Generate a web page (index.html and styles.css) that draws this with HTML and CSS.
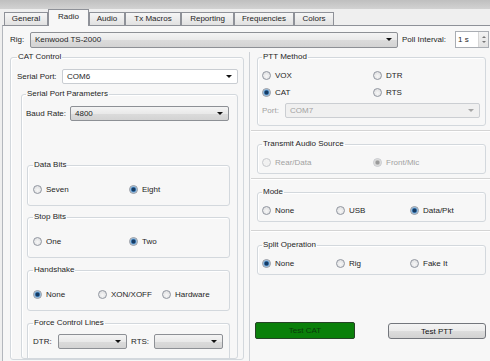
FILE: index.html
```html
<!DOCTYPE html>
<html lang="en">
<head>
    <meta charset="UTF-8">
    <title>Settings - Radio</title>
    <link rel="stylesheet" href="styles.css">
</head>
<body>
    <div class="frame-top"></div>

    <div class="tabbar">
        <div class="tab t-general">General</div>
        <div class="tab t-radio active">Radio</div>
        <div class="tab t-audio">Audio</div>
        <div class="tab t-macros">Tx Macros</div>
        <div class="tab t-reporting">Reporting</div>
        <div class="tab t-freq">Frequencies</div>
        <div class="tab t-colors">Colors</div>
    </div>

    <div class="page">
        <div class="rig-row">
            <span class="lbl lbl-rig">Rig:</span>
            <div class="combo combo-rig"><span class="combo-text">Kenwood TS-2000</span><span class="arrow"></span></div>
            <span class="lbl lbl-poll">Poll Interval:</span>
            <div class="spin">
                <span class="spin-text">1 s</span>
                <span class="spin-btns"><span class="up"></span><span class="down"></span></span>
            </div>
        </div>

        <div class="columns">
            <div class="col-left">
                <fieldset class="group cat">
                    <legend>CAT Control</legend>
                    <div class="field-row serial-row">
                        <span class="lbl lbl-serial">Serial Port:</span>
                        <div class="combo combo-edit"><span class="combo-text">COM6</span><span class="arrow"></span></div>
                    </div>

                    <fieldset class="group spp">
                        <legend>Serial Port Parameters</legend>
                        <div class="field-row baud-row">
                            <span class="lbl lbl-baud">Baud Rate:</span>
                            <div class="combo combo-baud"><span class="combo-text">4800</span><span class="arrow"></span></div>
                        </div>

                        <fieldset class="group inner first">
                            <legend>Data Bits</legend>
                            <div class="radios two">
                                <label class="opt"><span class="radio"></span>Seven</label>
                                <label class="opt"><span class="radio on"></span>Eight</label>
                            </div>
                        </fieldset>

                        <fieldset class="group inner stop">
                            <legend>Stop Bits</legend>
                            <div class="radios two">
                                <label class="opt"><span class="radio"></span>One</label>
                                <label class="opt"><span class="radio on"></span>Two</label>
                            </div>
                        </fieldset>

                        <fieldset class="group inner">
                            <legend>Handshake</legend>
                            <div class="radios three">
                                <label class="opt"><span class="radio on"></span>None</label>
                                <label class="opt"><span class="radio"></span>XON/XOFF</label>
                                <label class="opt"><span class="radio"></span>Hardware</label>
                            </div>
                        </fieldset>

                        <fieldset class="group inner force">
                            <legend>Force Control Lines</legend>
                            <div class="field-row lines-row">
                                <span class="lbl lbl-dtr">DTR:</span>
                                <div class="combo combo-line"><span class="combo-text"></span><span class="arrow"></span></div>
                                <span class="lbl lbl-rts">RTS:</span>
                                <div class="combo combo-line"><span class="combo-text"></span><span class="arrow"></span></div>
                            </div>
                        </fieldset>
                    </fieldset>
                </fieldset>
            </div>

            <div class="col-right">
                <fieldset class="group ptt">
                    <legend>PTT Method</legend>
                    <div class="radios ptt-grid">
                        <label class="opt"><span class="radio"></span>VOX</label>
                        <label class="opt"><span class="radio"></span>DTR</label>
                        <label class="opt"><span class="radio on"></span>CAT</label>
                        <label class="opt"><span class="radio"></span>RTS</label>
                    </div>
                    <div class="field-row port-row">
                        <span class="lbl lbl-port disabled">Port:</span>
                        <div class="combo combo-disabled"><span class="combo-text">COM7</span><span class="arrow"></span></div>
                    </div>
                </fieldset>

                <div class="sep"></div>

                <fieldset class="group side">
                    <legend>Transmit Audio Source</legend>
                    <div class="radios audio-grid">
                        <label class="opt disabled"><span class="radio"></span>Rear/Data</label>
                        <label class="opt disabled"><span class="radio on"></span>Front/Mic</label>
                    </div>
                </fieldset>

                <div class="sep"></div>

                <fieldset class="group side">
                    <legend>Mode</legend>
                    <div class="radios mode-grid">
                        <label class="opt"><span class="radio"></span>None</label>
                        <label class="opt"><span class="radio"></span>USB</label>
                        <label class="opt"><span class="radio on"></span>Data/Pkt</label>
                    </div>
                </fieldset>

                <div class="sep loose"></div>

                <fieldset class="group side">
                    <legend>Split Operation</legend>
                    <div class="radios mode-grid">
                        <label class="opt"><span class="radio on"></span>None</label>
                        <label class="opt"><span class="radio"></span>Rig</label>
                        <label class="opt"><span class="radio"></span>Fake It</label>
                    </div>
                </fieldset>

                <div class="buttons">
                    <button class="btn btn-cat">Test CAT</button>
                    <button class="btn btn-ptt">Test PTT</button>
                </div>
            </div>
        </div>
    </div>
</body>
</html>
```

FILE: styles.css
```css
:root {
    --page-bg: #f7f7f7;
    --strip-bg: #efefef;
    --tab-border: #8e9198;
    --group-border: #d3d8dd;
    --text-color: #1e1e1e;
    --disabled-text: #a2a2a2;
}

* {
    box-sizing: border-box;
}

body {
    margin: 0;
    width: 490px;
    height: 361px;
    overflow: hidden;
    background: var(--strip-bg);
    font-family: "Liberation Sans", Arial, sans-serif;
    font-size: 8px;
    color: var(--text-color);
}

/* window frame and tabs */

.frame-top {
    height: 9px;
    background: linear-gradient(#bfbfbf, #d2d2d2);
}

.tabbar {
    display: flex;
    align-items: flex-end;
    height: 16px;
    padding-left: 4px;
}

.tab {
    height: 13px;
    line-height: 12px;
    text-align: center;
    border: 1px solid var(--tab-border);
    border-bottom: none;
    background: linear-gradient(#f6f6f6, #e1e1e1);
    white-space: nowrap;
}

.tab.active {
    height: 17px;
    line-height: 13px;
    margin-bottom: -1px;
    background: var(--page-bg);
    position: relative;
    z-index: 1;
}

.t-general { width: 44px; }
.t-radio { width: 41px; }
.t-audio { width: 36px; }
.t-macros { width: 56px; }
.t-reporting { width: 53px; }
.t-freq { width: 60px; }
.t-colors { width: 40px; }

.page {
    margin-left: 2px;
    height: 336px;
    border-top: 1px solid var(--tab-border);
    border-left: 1px solid #b3b7bd;
    background: var(--page-bg);
}

/* rig row */

.rig-row {
    display: flex;
    align-items: center;
    height: 17px;
    margin-top: 5px;
    padding-left: 7px;
}

.lbl {
    white-space: nowrap;
    flex: none;
}

.lbl-rig { width: 20px; }

.lbl-poll {
    width: 53px;
    margin-left: 4px;
}

.combo {
    display: flex;
    align-items: center;
    height: 15px;
    padding: 0 5px 0 4px;
    border: 1px solid #8d9095;
    border-radius: 2px;
    background: linear-gradient(#f4f4f4, #e9e9e9 50%, #dbdbdb 51%, #d3d3d3);
}

.combo-text {
    flex: 1;
    white-space: nowrap;
}

.arrow {
    flex: none;
    width: 0;
    height: 0;
    border-left: 3px solid transparent;
    border-right: 3px solid transparent;
    border-top: 3px solid #111;
}

.combo-rig {
    width: 368px;
    height: 16px;
}

.spin {
    display: flex;
    align-items: center;
    width: 34px;
    height: 17px;
    padding-left: 2px;
    border: 1px solid #a9adb3;
    background: #fff;
}

.spin-text {
    flex: 1;
}

.spin-btns {
    display: flex;
    flex-direction: column;
    justify-content: center;
    gap: 3px;
    width: 10px;
    height: 15px;
    border-left: 1px solid #d6d6d6;
    align-items: center;
    background: linear-gradient(#f3f3f3, #e2e2e2);
}

.spin-btns .up,
.spin-btns .down {
    width: 0;
    height: 0;
    border-left: 2px solid transparent;
    border-right: 2px solid transparent;
}

.spin-btns .up { border-bottom: 2px solid #777; }
.spin-btns .down { border-top: 2px solid #777; }

/* columns */

.columns {
    display: grid;
    grid-template-columns: 247px 1fr;
    margin-top: 4px;
    height: 309px;
}

.col-left {
    padding-left: 7px;
    border-right: 1px solid #cdd1d6;
}

.col-right {
    padding: 0 4px 0 7px;
}

/* group boxes */

.group {
    margin: 0;
    min-width: 0;
    border: 1px solid var(--group-border);
    border-radius: 3px;
    box-shadow: inset 1px 1px 0 #fff;
}

.group legend {
    padding: 0 1px;
    line-height: 10px;
    font-size: 8px;
    white-space: nowrap;
}

.cat {
    width: 234px;
    padding: 0 5px 0 6px;
}

.spp {
    margin: 5px 0 0 4px;
    padding: 0 7px 0 4px;
}

.inner {
    margin: 7px 0 0 1px;
    padding: 12px 4px 9px 5px;
}

.inner.first { margin-top: 39px; }
.inner.stop { margin-top: 6px; }

.inner.force {
    padding-top: 6px;
    border-bottom: none;
    border-radius: 3px 3px 0 0;
}

.field-row {
    display: flex;
    align-items: center;
    height: 15px;
}

.serial-row { margin-top: 7px; }
.lbl-serial { width: 45px; }

.combo-edit {
    flex: 1;
    background: #fff;
    border-color: #c9cdd2;
}

.baud-row { margin-top: 7px; }
.lbl-baud { width: 44px; }

.combo-baud {
    flex: 1;
    margin-right: 1px;
}

.lbl-dtr { width: 25px; }

.lbl-rts {
    width: 23px;
    margin-left: 4px;
}

.combo-line {
    width: 69px;
    height: 15px;
}

/* radio buttons */

.radios {
    display: grid;
    grid-auto-rows: 14px;
}

.radios.two { grid-template-columns: 96px 1fr; }
.radios.three { grid-template-columns: 65px 64px 1fr; }

.opt {
    display: flex;
    align-items: center;
    gap: 4px;
    white-space: nowrap;
}

.radio {
    flex: none;
    width: 9px;
    height: 9px;
    border-radius: 50%;
    border: 1px solid #9196a0;
    background: radial-gradient(circle at 50% 60%, #f7f7f7, #d9dadc);
}

.radio.on {
    background: radial-gradient(circle, #163a62 0 1.4px, #3f79b0 2.2px, #a9cbe7 3.2px, #eef4f9 4px);
}

.opt.disabled {
    color: var(--disabled-text);
}

.opt.disabled .radio {
    border-color: #c6c8cc;
    background: #f1f1f1;
}

.opt.disabled .radio.on {
    background: radial-gradient(circle, #9a9a9a 0 1.4px, #c2c2c2 2.2px, #e4e4e4 3.2px, #f3f3f3 4px);
}

/* right column */

.ptt {
    padding: 6px 5px 7px 4px;
}

.ptt-grid {
    grid-template-columns: 111px 1fr;
    row-gap: 3px;
}

.port-row { margin-top: 4px; }

.lbl-port { width: 23px; }

.disabled { color: var(--disabled-text); }

.combo-disabled {
    flex: 1;
    color: var(--disabled-text);
    border-color: #cbced2;
    background: #f0f0f0;
}

.combo-disabled .arrow { border-top-color: #a6a6a6; }

.sep {
    height: 2px;
    margin: 4px -4px 7px -6px;
    border-top: 1px solid #d4d4d4;
    border-bottom: 1px solid #fff;
}

.sep.loose { margin: 8px -4px 8px -6px; }

.side {
    padding: 6px 5px 4px 4px;
}

.audio-grid { grid-template-columns: 111px 1fr; }
.mode-grid { grid-template-columns: 74px 74px 1fr; }

.buttons {
    display: flex;
    justify-content: space-between;
    margin: 47px 0 0 -2px;
}

.btn {
    height: 17px;
    padding: 0;
    font-family: inherit;
    font-size: 8px;
    border-radius: 2px;
}

.btn-cat {
    width: 100px;
    color: #0b3a0b;
    background: #0a800a;
    border: 1px solid #264326;
}

.btn-ptt {
    width: 98px;
    margin-top: 1px;
    height: 16px;
    color: #111;
    background: linear-gradient(#f4f4f4, #ebebeb 50%, #dddddd 51%, #d2d2d2);
    border: 1px solid #73767c;
    border-radius: 3px;
}
```
